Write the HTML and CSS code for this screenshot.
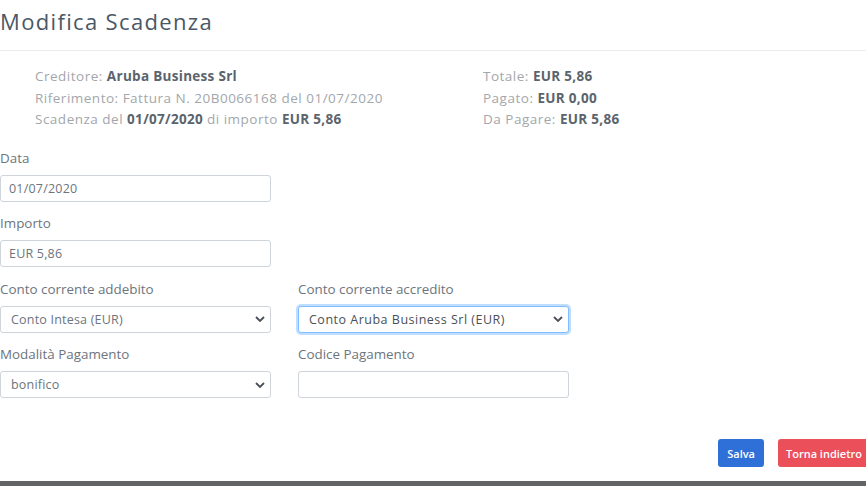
FILE: index.html
```html
<!DOCTYPE html>
<html lang="it">
<head>
    <meta charset="UTF-8">
    <meta name="viewport" content="width=device-width, initial-scale=1.0">
    <title>Modifica Scadenza</title>
    <link rel="stylesheet" href="styles.css">
</head>
<body>
    <div class="modal">
        <div class="modal-header">
            <h4>Modifica Scadenza</h4>
        </div>

        <div class="modal-body">
            <div class="summary">
                <div class="summary-col">
                    <div>Creditore: <b>Aruba Business Srl</b></div>
                    <div>Riferimento: Fattura N. 20B0066168 del 01/07/2020</div>
                    <div>Scadenza del <b>01/07/2020</b> di importo <b>EUR 5,86</b></div>
                </div>
                <div class="summary-col">
                    <div>Totale: <b>EUR 5,86</b></div>
                    <div>Pagato: <b>EUR 0,00</b></div>
                    <div>Da Pagare: <b>EUR 5,86</b></div>
                </div>
            </div>

            <form class="scadenza-form" id="scadenzaForm">
                <div class="form-row">
                    <div class="input-group">
                        <label for="data">Data</label>
                        <input type="text" id="data" name="data" value="01/07/2020">
                    </div>
                </div>
                <div class="form-row">
                    <div class="input-group">
                        <label for="importo">Importo</label>
                        <input type="text" id="importo" name="importo" value="EUR 5,86">
                    </div>
                </div>
                <div class="form-row">
                    <div class="input-group">
                        <label for="addebito">Conto corrente addebito</label>
                        <select id="addebito" name="addebito">
                            <option>Conto Intesa (EUR)</option>
                        </select>
                    </div>
                    <div class="input-group">
                        <label for="accredito">Conto corrente accredito</label>
                        <select id="accredito" name="accredito" class="focused">
                            <option>Conto Aruba Business Srl (EUR)</option>
                        </select>
                    </div>
                </div>
                <div class="form-row">
                    <div class="input-group">
                        <label for="modalita">Modalità Pagamento</label>
                        <select id="modalita" name="modalita">
                            <option>bonifico</option>
                        </select>
                    </div>
                    <div class="input-group">
                        <label for="codice">Codice Pagamento</label>
                        <input type="text" id="codice" name="codice">
                    </div>
                </div>
            </form>
        </div>

        <div class="modal-footer">
            <button type="submit" form="scadenzaForm" class="btn btn-primary">Salva</button>
            <button type="button" class="btn btn-danger">Torna indietro</button>
        </div>
    </div>
    <div class="page-bottom"></div>
</body>
</html>
```

FILE: styles.css
```css
html, body {
    margin: 0;
    padding: 0;
    height: 100%;
    overflow: hidden;
}

body {
    display: flex;
    flex-direction: column;
    font-family: "Open Sans", "Noto Sans", sans-serif;
    background: #fff;
}

.modal {
    flex: 1;
    width: 870px;
    display: flex;
    flex-direction: column;
}

.modal-header {
    height: 51px;
    border-bottom: 1px solid #e9ecef;
    box-sizing: border-box;
}

.modal-header h4 {
    margin: 0;
    padding-top: 6px;
    font-size: 22px;
    font-weight: 400;
    line-height: 30px;
    color: #4a5866;
    letter-spacing: 1.35px;
}

.modal-body {
    padding-top: 15px;
}

.summary {
    display: flex;
    padding-left: 35px;
    font-size: 13.5px;
    line-height: 21.5px;
    color: #a3a7ab;
    letter-spacing: 0.5px;
}

.summary b {
    color: #5b646c;
    font-weight: 700;
    letter-spacing: 0.3px;
}

.summary-col:first-child {
    width: 448px;
}

.scadenza-form {
    margin-top: 17px;
}

.form-row {
    display: flex;
    gap: 27px;
    margin-bottom: 11.5px;
}

.input-group {
    width: 271px;
}

.input-group label {
    display: block;
    margin-bottom: 6px;
    font-size: 13.4px;
    line-height: 21px;
    color: #6c757d;
}

.input-group input,
.input-group select {
    display: block;
    width: 100%;
    height: 27px;
    box-sizing: border-box;
    padding: 0 8px;
    border: 1px solid #ced4da;
    border-radius: 3px;
    background: #fff;
    font-family: inherit;
    font-size: 12.5px;
    letter-spacing: 0.2px;
    color: #6c757d;
}

.input-group select {
    padding-left: 10px;
    appearance: none;
    -webkit-appearance: none;
    background-image: url("data:image/svg+xml,%3Csvg xmlns='http://www.w3.org/2000/svg' width='10' height='6' viewBox='0 0 10 6'%3E%3Cpath d='M1 1l4 4 4-4' fill='none' stroke='%23495057' stroke-width='1.8'/%3E%3C/svg%3E");
    background-repeat: no-repeat;
    background-position: right 5px center;
    background-size: 10px 6px;
}

.input-group select.focused {
    border-color: #80bdff;
    box-shadow: 0 0 0 2px rgba(0, 123, 255, 0.25);
    color: #495057;
    letter-spacing: 0.5px;
}

.modal-footer {
    display: flex;
    justify-content: flex-end;
    gap: 14px;
    margin-top: auto;
    padding-bottom: 14px;
}

.btn {
    height: 28px;
    padding: 0 8px;
    border: none;
    border-radius: 3px;
    font-family: inherit;
    font-size: 11px;
    font-weight: 600;
    color: #fff;
    cursor: pointer;
}

.btn-primary {
    padding: 0 9px;
    background: #2e70d8;
}

.btn-danger {
    background: #ea4f5a;
}

.page-bottom {
    height: 5px;
    background: #626466;
}
```
